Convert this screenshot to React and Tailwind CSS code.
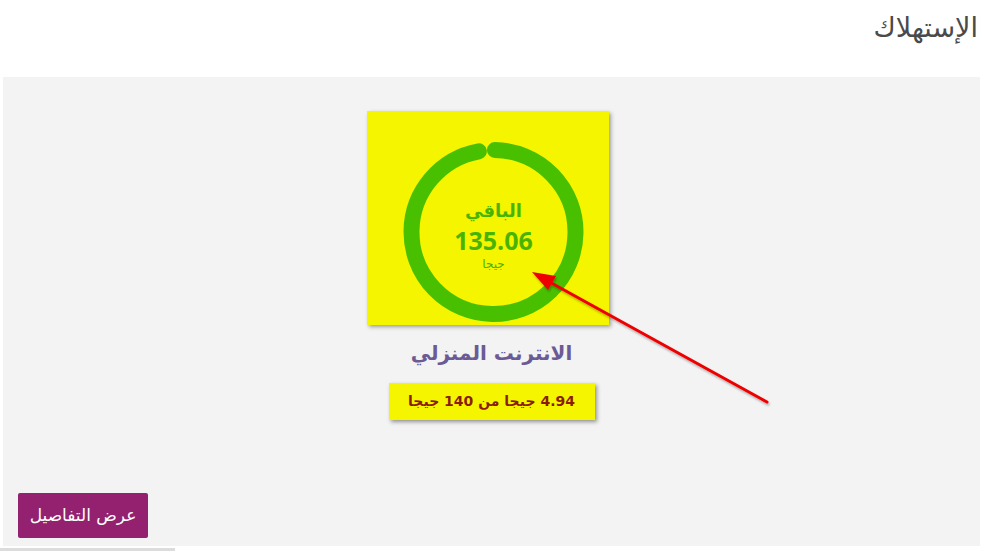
import React from "react";

export default function App() {
  const r = 82;
  const c = 2 * Math.PI * r;
  const dash = c - 17;
  return (
    <div
      className="relative w-[984px] h-[552px] bg-white overflow-hidden"
      style={{ fontFamily: '"DejaVu Sans", "Noto Sans", sans-serif' }}
    >
      <div className="flex justify-end pr-[6px] pt-[11px] h-[77px]">
        <h1 dir="rtl" className="text-[27px] leading-[34px] text-[#4a4a4a] font-normal">
          الإستهلاك
        </h1>
      </div>
      <div className="ml-[3px] mr-[4px] h-[469px] bg-[#f3f3f3] flex flex-col items-center pt-[34px]">
        <div className="mr-[8px] w-[242px] h-[214px] bg-[#f5f500] shadow-[2px_2px_4px_rgba(0,0,0,0.35)] relative flex items-center justify-center">
          <svg width="242" height="214" viewBox="0 0 242 214" className="absolute inset-0">
            <circle
              cx="126.5"
              cy="121"
              r={r}
              fill="none"
              stroke="#48c000"
              strokeWidth="16"
              strokeLinecap="round"
              strokeDasharray={`${dash} ${c}`}
              transform="rotate(-89 126.5 121)"
            />
          </svg>
          <div dir="rtl" className="relative flex flex-col items-center text-[#49b400] font-bold mt-[34px] ml-[12px]">
            <div className="text-[18px] leading-[24px]">الباقي</div>
            <div className="text-[25px] leading-[34px]" style={{ fontFamily: '"Open Sans", sans-serif' }}>135.06</div>
            <div className="text-[12px] leading-[14px] font-normal">جيجا</div>
          </div>
        </div>
        <div dir="rtl" className="mt-[14px] text-[20px] leading-[28px] font-bold text-[#6b5a93]">
          الانترنت المنزلي
        </div>
        <div
          dir="rtl"
          className="mt-[16px] w-[206px] h-[37px] bg-[#f5f500] shadow-[2px_2px_4px_rgba(0,0,0,0.4)] flex items-center justify-center text-[14px] font-bold text-[#8a1d00]"
        >
          4.94 جيجا من 140 جيجا
        </div>
        <div className="self-start ml-[15px] mt-[73px]">
          <button
            dir="rtl"
            className="w-[130px] h-[45px] bg-[#93216f] rounded-[2px] text-white text-[17px] flex items-center justify-center"
          >
            عرض التفاصيل
          </button>
        </div>
      </div>
      <div className="mt-[2px] w-[175px] h-[3px] bg-[#dcdcdc]" />
      <svg
        className="absolute left-0 top-0 pointer-events-none"
        width="984"
        height="552"
        viewBox="0 0 984 552"
      >
        <defs>
          <filter id="sh" x="-10%" y="-10%" width="120%" height="120%">
            <feDropShadow dx="1" dy="2" stdDeviation="1.2" floodColor="#000" floodOpacity="0.3" />
          </filter>
        </defs>
        <g filter="url(#sh)">
          <line x1="767" y1="402" x2="546" y2="280" stroke="#ee0000" strokeWidth="3" strokeLinecap="round" />
          <polygon points="532,272 556,276 548,290" fill="#ee0000" />
        </g>
      </svg>
    </div>
  );
}
